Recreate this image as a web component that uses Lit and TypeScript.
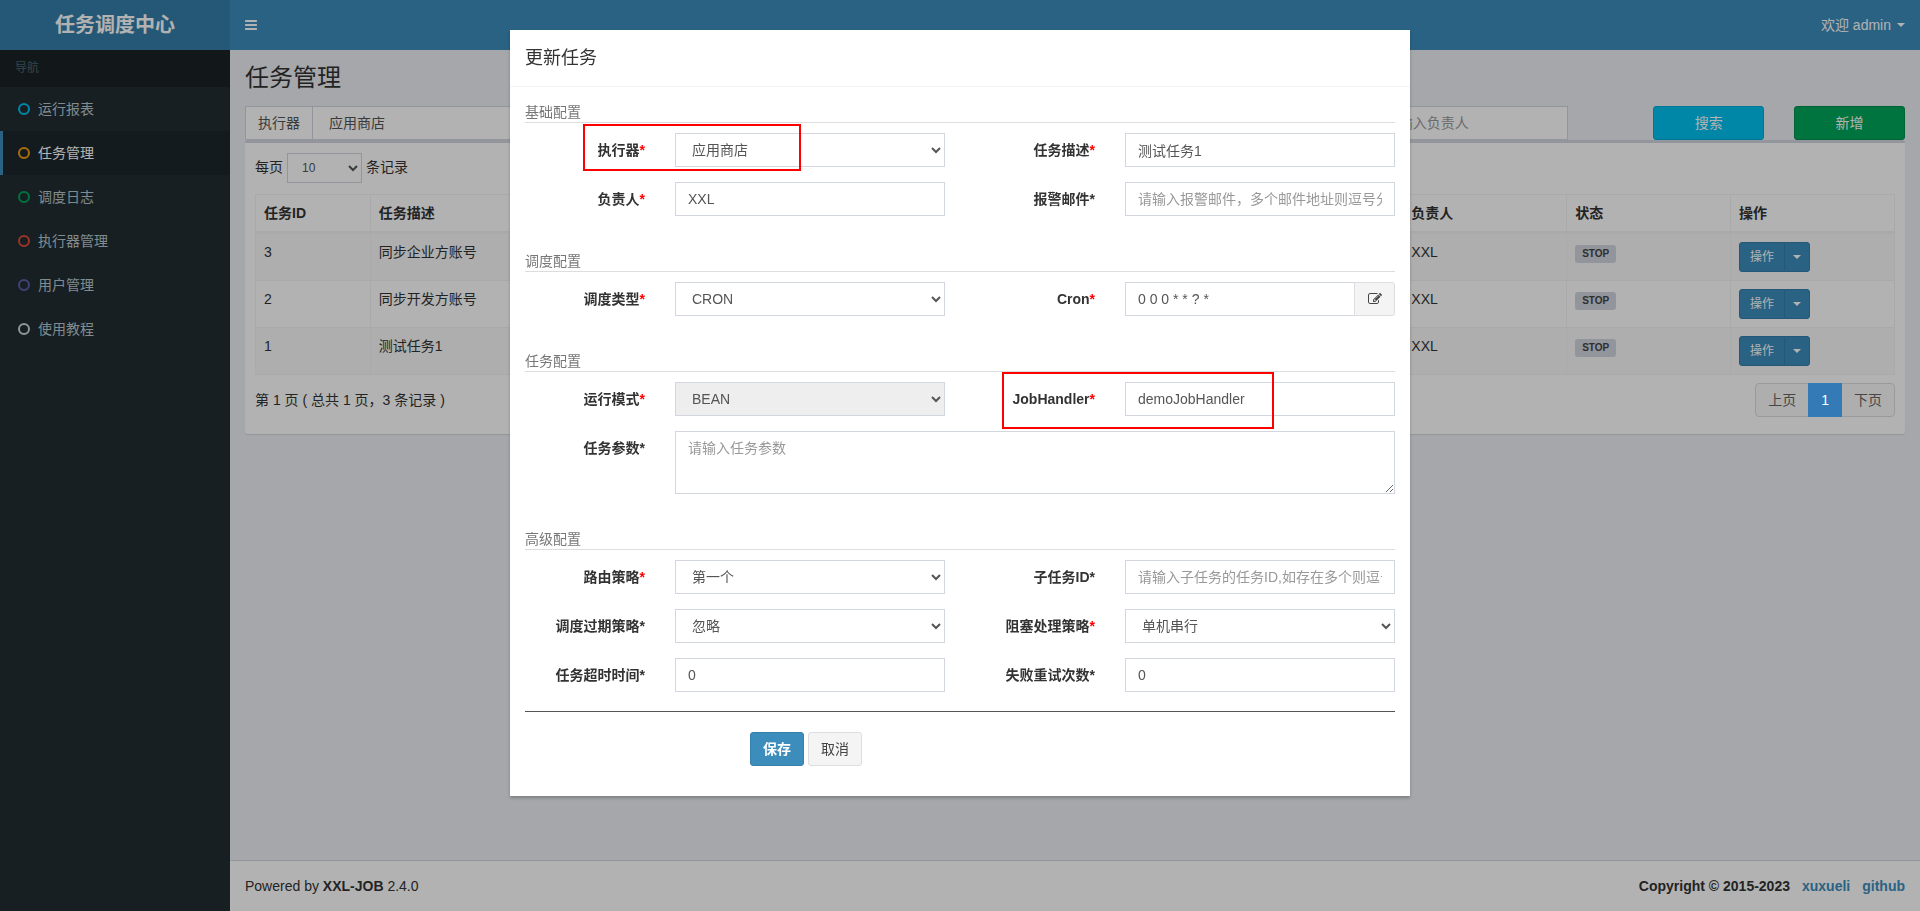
import { LitElement, html, css, svg, nothing } from "lit";
import { customElement, state } from "lit/decorators.js";

interface Field {
  id: string;
  label: string;
  required?: boolean;
  kind: "text" | "select" | "textarea" | "cron";
  value?: string;
  placeholder?: string;
  disabled?: boolean;
}

interface Section {
  title: string;
  fields: Field[];
}

const NAV = [
  { label: "运行报表", color: "#00c0ef" },
  { label: "任务管理", color: "#f39c12" },
  { label: "调度日志", color: "#00a65a" },
  { label: "执行器管理", color: "#dd4b39" },
  { label: "用户管理", color: "#605ca8" },
  { label: "使用教程", color: "#d2d6de" },
];

const JOBS = [
  { id: 3, desc: "同步企业方账号", author: "XXL", status: "STOP" },
  { id: 2, desc: "同步开发方账号", author: "XXL", status: "STOP" },
  { id: 1, desc: "测试任务1", author: "XXL", status: "STOP" },
];

const SECTIONS: Section[] = [
  {
    title: "基础配置",
    fields: [
      { id: "group", label: "执行器", required: true, kind: "select", value: "应用商店" },
      { id: "desc", label: "任务描述", required: true, kind: "text", value: "测试任务1" },
      { id: "author", label: "负责人", required: true, kind: "text", value: "XXL" },
      { id: "email", label: "报警邮件", kind: "text", placeholder: "请输入报警邮件，多个邮件地址则逗号分隔" },
    ],
  },
  {
    title: "调度配置",
    fields: [
      { id: "type", label: "调度类型", required: true, kind: "select", value: "CRON" },
      { id: "cron", label: "Cron", required: true, kind: "cron", value: "0 0 0 * * ? *" },
    ],
  },
  {
    title: "任务配置",
    fields: [
      { id: "mode", label: "运行模式", required: true, kind: "select", value: "BEAN", disabled: true },
      { id: "handler", label: "JobHandler", required: true, kind: "text", value: "demoJobHandler" },
      { id: "param", label: "任务参数", kind: "textarea", placeholder: "请输入任务参数" },
    ],
  },
  {
    title: "高级配置",
    fields: [
      { id: "route", label: "路由策略", required: true, kind: "select", value: "第一个" },
      { id: "child", label: "子任务ID", kind: "text", placeholder: "请输入子任务的任务ID,如存在多个则逗号分隔" },
      { id: "misfire", label: "调度过期策略", kind: "select", value: "忽略" },
      { id: "block", label: "阻塞处理策略", required: true, kind: "select", value: "单机串行" },
      { id: "timeout", label: "任务超时时间", kind: "text", value: "0" },
      { id: "retry", label: "失败重试次数", kind: "text", value: "0" },
    ],
  },
];

const base = css`
  *, *::before, *::after { box-sizing: border-box; }
  a { color: #3c8dbc; text-decoration: none; }
  h1, h4, p, ul { margin: 0; padding: 0; font-weight: 400; }
  input, select, textarea, button { font-family: inherit; font-size: 14px; margin: 0; }
  .control {
    display: block;
    width: 100%;
    height: 34px;
    padding: 6px 12px;
    line-height: 20px;
    color: #555;
    background: #fff;
    border: 1px solid #d2d6de;
    border-radius: 0;
    outline: none;
  }
  .control::placeholder { color: #999; opacity: 1; }
  .control:disabled { background: #eee; opacity: 1; }
  .btn {
    height: 34px;
    padding: 6px 12px;
    line-height: 20px;
    border: 1px solid transparent;
    border-radius: 3px;
    color: #fff;
    cursor: pointer;
  }
  .primary { background: #3c8dbc; border-color: #367fa9; }
  .info { background: #00c0ef; border-color: #00acd6; }
  .success { background: #00a65a; border-color: #008d4c; }
  .default { background: #f4f4f4; border-color: #ddd; color: #444; }
  .caret {
    display: inline-block;
    border-top: 4px solid currentColor;
    border-left: 4px solid transparent;
    border-right: 4px solid transparent;
    vertical-align: middle;
  }
  svg { display: block; fill: currentColor; }
`;

@customElement("job-dialog")
class JobDialog extends LitElement {
  static styles = [
    base,
    css`
      :host { display: block; }
      .dialog {
        position: relative;
        max-width: 900px;
        margin: 30px auto;
        background: #fff;
        box-shadow: 0 2px 3px rgba(0, 0, 0, 0.25);
      }
      .head { padding: 15px; border-bottom: 1px solid #f4f4f4; }
      .head h4 { font-size: 18px; line-height: 26px; }
      .body { padding: 15px; }
      .section { padding-bottom: 35px; }
      .section:last-of-type { padding-bottom: 19px; }
      .legend { color: #777; border-bottom: 1px solid #ddd; margin-bottom: 10px; }
      .fields {
        display: grid;
        grid-template-columns: 2fr 4fr 2fr 4fr;
        gap: 15px 0;
        margin: 0 -15px;
      }
      .fields label { padding: 7px 15px 0; text-align: right; font-weight: 700; }
      .star { color: #333; }
      .star.req { color: red; }
      .cell { padding: 0 15px; min-width: 0; }
      .wide { grid-column: span 3; }
      textarea.control { height: 63px; resize: vertical; }
      .group { display: flex; }
      .group .control { flex: 1; min-width: 0; }
      .group .btn { width: 41px; margin-left: -1px; border-radius: 0 3px 3px 0; display: flex; align-items: center; justify-content: center; padding: 0; }
      .foot {
        display: flex;
        gap: 4px;
        padding: 20px 0 15px 25.862%;
        border-top: 1px solid #555;
      }
      .foot .primary { font-weight: 700; }
      .mark { position: absolute; border: 2px solid #f00; pointer-events: none; }
      .mark-group { left: 73px; top: 94px; width: 218px; height: 47px; }
      .mark-handler { left: 492px; top: 342px; width: 272px; height: 57px; }
    `,
  ];

  private control(f: Field) {
    if (f.kind === "select") {
      return html`<select class="control" id=${f.id} ?disabled=${f.disabled}><option>${f.value}</option></select>`;
    }
    if (f.kind === "textarea") {
      return html`<textarea class="control" id=${f.id} placeholder=${f.placeholder ?? ""}></textarea>`;
    }
    const input = html`<input class="control" type="text" id=${f.id} .value=${f.value ?? ""} placeholder=${f.placeholder ?? ""} />`;
    if (f.kind === "text") return input;
    return html`<div class="group">
      ${input}
      <button class="btn default" type="button" aria-label="Cron">
        <svg width="14" height="14" viewBox="0 0 1792 1792">
          <path d="M888 1184l116-116-152-152-116 116v56h96v96h56zm440-720q-16-16-33 1l-350 350q-17 17-1 33t33-1l350-350q17-17 1-33zm80 594v190q0 119-84.5 203.5t-203.5 84.5h-832q-119 0-203.5-84.5t-84.5-203.5v-832q0-119 84.5-203.5t203.5-84.5h832q63 0 117 25 15 7 18 23 3 17-9 29l-49 49q-14 14-32 8-23-6-45-6h-832q-66 0-113 47t-47 113v832q0 66 47 113t113 47h832q66 0 113-47t47-113v-126q0-13 9-22l64-64q15-15 35-7t20 29zm-96-738l288 288-672 672h-288v-288zm444 132l-92 92-288-288 92-92q28-28 68-28t68 28l152 152q28 28 28 68t-28 68z" />
        </svg>
      </button>
    </div>`;
  }

  render() {
    return html`<div class="dialog" role="dialog" aria-labelledby="title">
      <div class="head"><h4 id="title">更新任务</h4></div>
      <form class="body" @submit=${(e: Event) => e.preventDefault()}>
        ${SECTIONS.map(
          (s) => html`<section class="section">
            <p class="legend">${s.title}</p>
            <div class="fields">
              ${s.fields.map(
                (f) => html`<label for=${f.id}>${f.label}<span class="star ${f.required ? "req" : ""}">*</span></label>
                  <div class="cell ${f.kind === "textarea" ? "wide" : ""}">${this.control(f)}</div>`
              )}
            </div>
          </section>`
        )}
        <div class="foot">
          <button class="btn primary" type="submit">保存</button>
          <button class="btn default" type="button">取消</button>
        </div>
      </form>
      <div class="mark mark-group"></div>
      <div class="mark mark-handler"></div>
    </div>`;
  }
}

@customElement("app-root")
class AppRoot extends LitElement {
  @state() private active = 1;

  static styles = [
    base,
    css`
      :host {
        display: block;
        font-family: "Liberation Sans", "Noto Sans CJK SC", sans-serif;
        font-size: 14px;
        line-height: 20px;
        color: #333;
      }
      .page { display: grid; grid-template: 50px 1fr / 230px minmax(0, 1fr); min-height: 100vh; background: #ecf0f5; }
      .logo { background: #367fa9; color: #fff; font-size: 20px; font-weight: 700; line-height: 50px; text-align: center; }
      .topbar { background: #3c8dbc; display: flex; align-items: center; justify-content: space-between; padding: 0 15px; }
      .topbar button { background: none; border: 0; padding: 0; color: #fff; line-height: 20px; cursor: pointer; display: flex; align-items: center; gap: 6px; }
      .sidebar { background: #222d32; }
      .sidebar ul { list-style: none; }
      .nav-head { padding: 10px 15px; font-size: 12px; line-height: 17px; color: #4b646f; background: #1a2226; }
      .nav-link { display: flex; align-items: center; gap: 8px; padding: 12px 15px; border-left: 3px solid transparent; color: #b8c7ce; }
      .nav-link.on { color: #fff; background: #1e282c; border-left-color: #3c8dbc; }
      .main { display: flex; flex-direction: column; min-width: 0; }
      .content { flex: 1; padding: 15px; }
      h1 { font-size: 24px; line-height: 26px; margin-bottom: 15px; }
      .search { display: grid; grid-template-columns: repeat(12, minmax(0, 1fr)); column-gap: 30px; }
      .search .group { grid-column: 1 / span 3; display: flex; }
      .addon { flex: none; padding: 6px 12px; border: 1px solid #d2d6de; border-right: 0; background: #fff; color: #555; }
      .owner { grid-column: 9 / span 2; }
      .owner .control { width: 196px; }
      .search .info { grid-column: 11; }
      .box { background: #fff; border-top: 3px solid #d2d6de; border-radius: 3px; box-shadow: 0 1px 1px rgba(0, 0, 0, 0.1); padding: 10px 10px 17px; }
      .length { display: flex; align-items: center; gap: 4px; margin-bottom: 11px; height: 30px; }
      .length .control { width: 75px; height: 30px; padding: 5px 10px; font-size: 12px; line-height: 18px; }
      .length label { padding-bottom: 2px; }
      table { width: 100%; table-layout: fixed; border-collapse: separate; border-spacing: 0; border: 1px solid #f4f4f4; border-width: 1px 0 0 1px; }
      th, td { padding: 8px; text-align: left; vertical-align: top; border: 0 solid #f4f4f4; border-width: 0 1px 1px 0; }
      th { border-bottom-width: 3px; }
      tbody tr:nth-child(odd) { background: #f9f9f9; }
      .c-id { width: 7%; }
      .c-s { width: 10%; }
      .tag { display: block; width: 41px; height: 18px; margin-top: 3px; border-radius: 3px; background: #d2d6de; color: #444; font-size: 10px; font-weight: 700; line-height: 17px; text-align: center; }
      .ops { display: flex; }
      .ops .btn { height: 30px; padding: 5px 10px; font-size: 12px; line-height: 18px; }
      .ops .btn:first-child { border-radius: 3px 0 0 3px; }
      .ops .btn:last-child { border-radius: 0 3px 3px 0; margin-left: -1px; padding: 0 8px; display: flex; align-items: center; }
      .bottom { display: flex; justify-content: space-between; align-items: center; margin-top: 8px; }
      .pages { display: flex; }
      .pages .btn { background: #fafafa; color: #666; border-color: #ddd; border-radius: 4px 0 0 4px; }
      .pages .btn + .btn { margin-left: -1px; border-radius: 0; }
      .pages .btn:last-child { border-radius: 0 4px 4px 0; }
      .pages .btn.on { background: #337ab7; border-color: #337ab7; color: #fff; z-index: 1; }
      footer { display: flex; justify-content: space-between; padding: 15px; background: #fff; border-top: 1px solid #d2d6de; }
      .copy { display: flex; gap: 12px; font-weight: 700; }
      .overlay { position: fixed; inset: 0; overflow: auto; background: rgba(0, 0, 0, 0.3); }
    `,
  ];

  render() {
    return html`
      <div class="page">
        <a class="logo" href="#">任务调度中心</a>
        <header class="topbar">
          <button type="button" aria-label="菜单">
            <svg width="14" height="14" viewBox="0 0 1792 1792">
              <path d="M1536 1344v128q0 26-19 45t-45 19H64q-26 0-45-19t-19-45v-128q0-26 19-45t45-19h1408q26 0 45 19t19 45zm0-512v128q0 26-19 45t-45 19H64q-26 0-45-19t-19-45V832q0-26 19-45t45-19h1408q26 0 45 19t19 45zm0-512v128q0 26-19 45t-45 19H64q-26 0-45-19t-19-45V320q0-26 19-45t45-19h1408q26 0 45 19t19 45z" />
            </svg>
          </button>
          <button type="button">欢迎 admin <span class="caret"></span></button>
        </header>
        <nav class="sidebar">
          <ul>
            <li class="nav-head">导航</li>
            ${NAV.map(
              (n, i) => html`<li>
                <a class="nav-link ${i === this.active ? "on" : ""}" href="#" @click=${() => (this.active = i)}>
                  <svg width="12" height="12" viewBox="0 0 12 12">
                    <circle cx="6" cy="6" r="5" fill="none" stroke=${n.color} stroke-width="2" />
                  </svg>
                  ${n.label}
                </a>
              </li>`
            )}
          </ul>
        </nav>
        <div class="main">
          <main class="content">
            <h1>任务管理</h1>
            <div class="search">
              <div class="group">
                <label class="addon" for="executor">执行器</label>
                <select class="control" id="executor"><option>应用商店</option></select>
              </div>
              <div class="owner"><input class="control" type="text" placeholder="请输入负责人" aria-label="负责人" /></div>
              <button class="btn info" type="button">搜索</button>
              <button class="btn success" type="button">新增</button>
            </div>
            <div class="box">
              <div class="length">
                <label for="len">每页</label>
                <select class="control" id="len"><option>10</option></select>
                <label for="len">条记录</label>
              </div>
              <table>
                <thead>
                  <tr>
                    <th class="c-id">任务ID</th>
                    <th>任务描述</th>
                    <th class="c-s">负责人</th>
                    <th class="c-s">状态</th>
                    <th class="c-s">操作</th>
                  </tr>
                </thead>
                <tbody>
                  ${JOBS.map(
                    (j) => html`<tr>
                      <td>${j.id}</td>
                      <td>${j.desc}</td>
                      <td>${j.author}</td>
                      <td><span class="tag">${j.status}</span></td>
                      <td>
                        <div class="ops">
                          <button class="btn primary" type="button">操作</button>
                          <button class="btn primary" type="button" aria-label="操作"><span class="caret"></span></button>
                        </div>
                      </td>
                    </tr>`
                  )}
                </tbody>
              </table>
              <div class="bottom">
                <span>第 1 页 ( 总共 1 页，3 条记录 )</span>
                <div class="pages">
                  <button class="btn" type="button">上页</button>
                  <button class="btn on" type="button">1</button>
                  <button class="btn" type="button">下页</button>
                </div>
              </div>
            </div>
          </main>
          <footer>
            <span>Powered by <b>XXL-JOB</b> 2.4.0</span>
            <div class="copy"><span>Copyright © 2015-2023</span><a href="#">xuxueli</a><a href="#">github</a></div>
          </footer>
        </div>
      </div>
      <div class="overlay"><job-dialog></job-dialog></div>
    `;
  }
}
